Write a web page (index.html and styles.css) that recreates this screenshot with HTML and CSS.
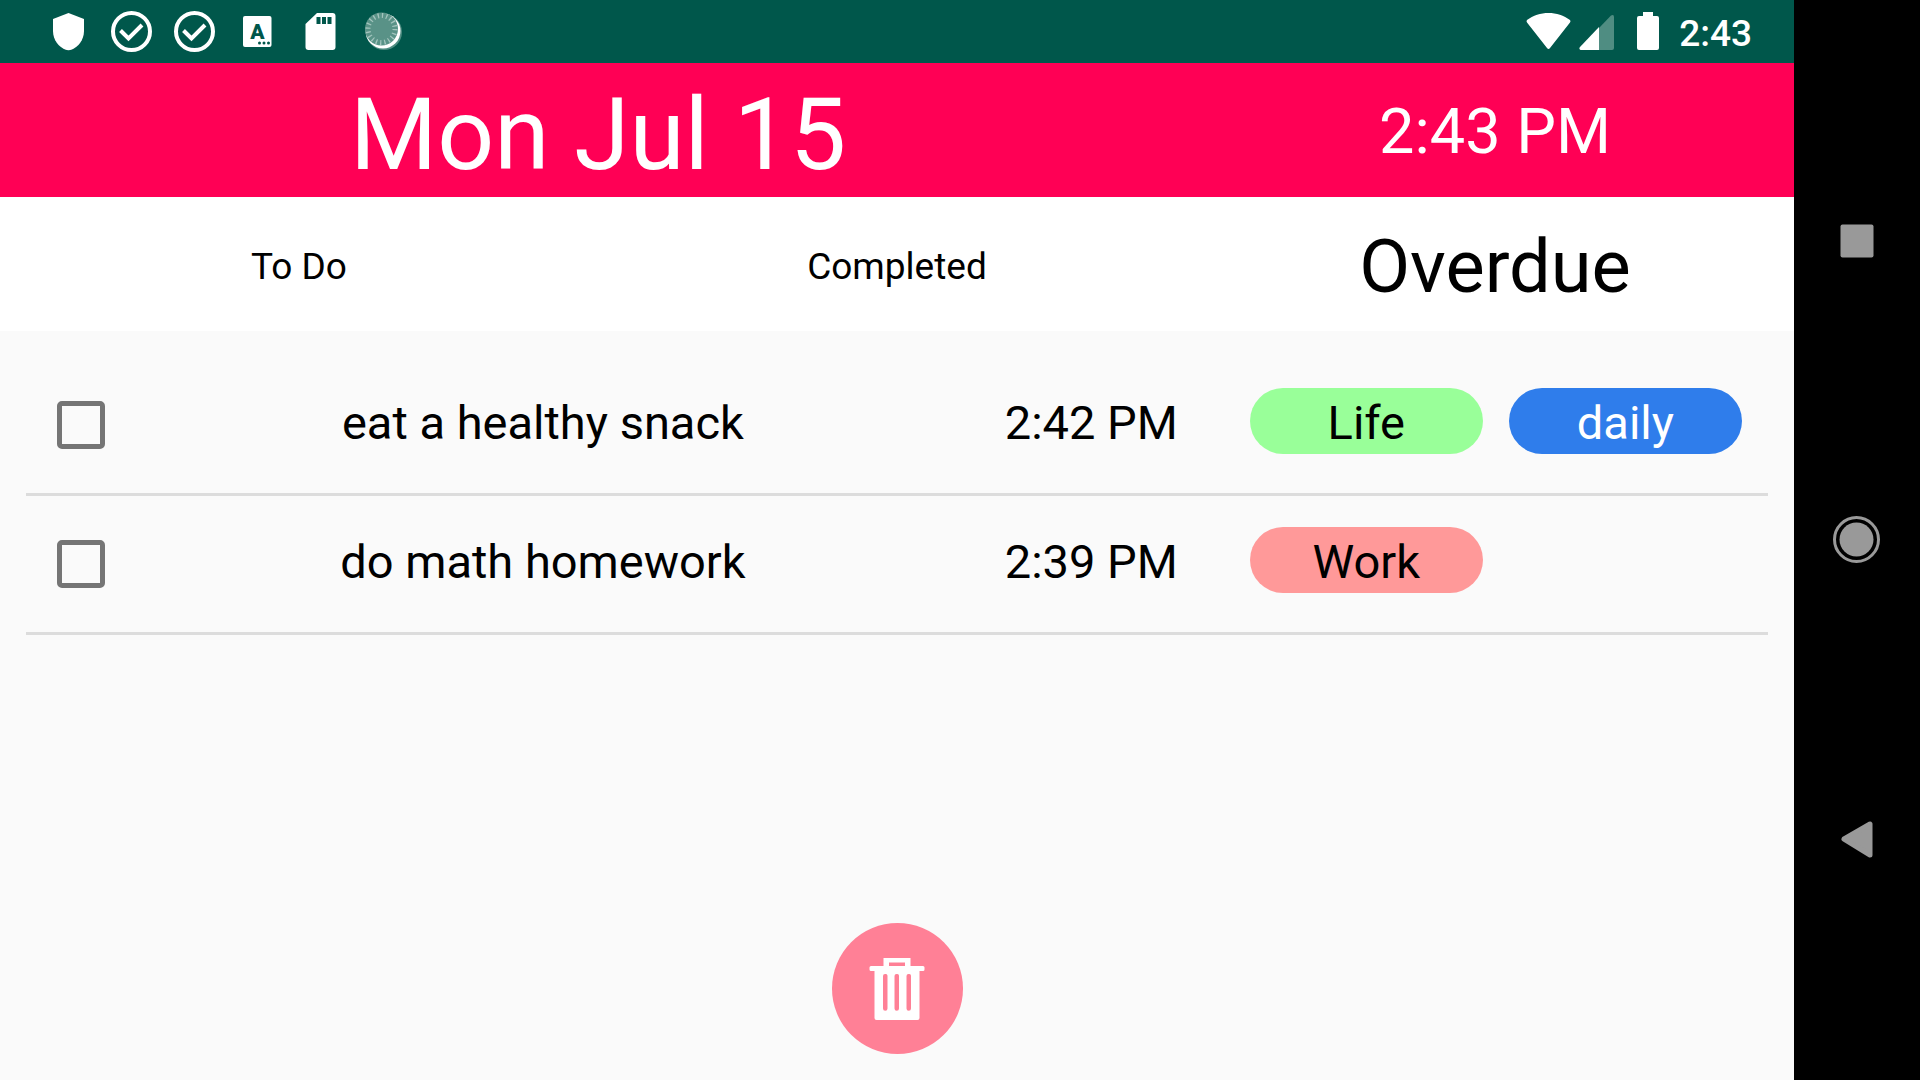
FILE: index.html
```
<!DOCTYPE html>
<html lang="en">
<head>
<meta charset="utf-8">
<meta name="viewport" content="width=device-width, initial-scale=1">
<title>Overdue tasks</title>
<link rel="stylesheet" href="styles.css">
</head>
<body>
<div class="device">
  <div class="screen">
    <div class="status-bar">
      <div class="notifications" aria-hidden="true">
        <svg class="notice" viewBox="0 0 63 63"><path fill="#fff" d="M31.500 13 47 19v12c0 9-6 16-12 18.500q-3.500 1.300-7 0C22 47 16 40 16 31V19z"/></svg>
        <svg class="notice" viewBox="0 0 63 63" fill="none" stroke="#fff" stroke-width="4"><circle cx="31.500" cy="31.500" r="18.500"/><path d="M20.500 30.500l8 8L42 25"/></svg>
        <svg class="notice" viewBox="0 0 63 63" fill="none" stroke="#fff" stroke-width="4"><circle cx="31.500" cy="31.500" r="18.500"/><path d="M20.500 30.500l8 8L42 25"/></svg>
        <svg class="notice" viewBox="0 0 63 63"><rect x="17" y="16" width="28.500" height="31" rx="2" fill="#fff"/><text class="notice-letter" x="31.500" y="39" text-anchor="middle">A</text><g fill="#00574b"><circle cx="33.500" cy="43" r="1.500"/><circle cx="38" cy="43" r="1.500"/><circle cx="42.500" cy="43" r="1.500"/></g></svg>
        <svg class="notice" viewBox="0 0 63 63"><path fill="#fff" d="M28 13h15.500q3 0 3 3v31q0 3-3 3h-24q-3 0-3-3V24z"/><path fill="#00574b" d="M27.500 17h4v7h-4zM33 17h4v7h-4zM38.500 17h4v7h-4z"/></svg>
        <svg class="notice" viewBox="0 0 63 63"><circle cx="32" cy="32" r="18" fill="#4f8d82"/><circle cx="31" cy="31" r="17.500" fill="#fff"/><circle cx="29.500" cy="29" r="16.500" fill="#599287"/><circle cx="29.500" cy="29" r="13.500" fill="none" stroke="#a3c5be" stroke-width="5" stroke-dasharray="1.300 2.940"/></svg>
      </div>
      <div class="system">
        <svg width="45" height="63" viewBox="0 0 45 63" aria-hidden="true"><path fill="#fff" d="M1 20C13 10.500 32 10.500 44 20q1 1 0 2.500L24 48q-1.500 2-3 0L1 22.500q-1-1.500 0-2.500z"/></svg>
        <svg class="signal" width="35" height="63" viewBox="0 0 35 63" aria-hidden="true"><path fill="#4f8d82" d="M20 28 32 15.500q3-1.500 3 1.500v31q0 2-2 2H20z"/><path fill="#fff" d="M20 27v23H1.500q-2-1-.5-3z"/></svg>
        <svg class="battery" width="22" height="63" viewBox="0 0 22 63" aria-hidden="true"><path fill="#fff" d="M6 12h10v4h4q2 0 2 2v30q0 2-2 2H2q-2 0-2-2V18q0-2 2-2h4z"/></svg>
        <time class="system-time">2:43</time>
      </div>
    </div>

    <header class="header">
      <h1 class="date">Mon Jul 15</h1>
      <time class="clock">2:43 PM</time>
    </header>

    <nav class="tabs">
      <button class="tab" type="button">To Do</button>
      <button class="tab" type="button">Completed</button>
      <button class="tab tab-active" type="button" aria-current="page">Overdue</button>
    </nav>

    <main class="content">
      <ul class="tasks">
        <li class="task">
          <input class="check" type="checkbox" id="task-snack">
          <label class="name" for="task-snack">eat a healthy snack</label>
          <time class="due">2:42 PM</time>
          <div class="chips"><span class="chip chip-life">Life</span><span class="chip chip-daily">daily</span></div>
        </li>
        <li class="task">
          <input class="check" type="checkbox" id="task-math">
          <label class="name" for="task-math">do math homework</label>
          <time class="due">2:39 PM</time>
          <div class="chips"><span class="chip chip-work">Work</span></div>
        </li>
      </ul>
      <button class="delete" type="button" aria-label="Delete">
        <svg width="56" height="64" viewBox="0 0 56 64" aria-hidden="true"><path fill="#fff" fill-rule="evenodd" d="M14.500 1h27v8H54q1.500 0 1.500 1.500v2q0 1.500-1.500 1.500h-3.500v47q0 2-2 2h-41q-2 0-2-2V14H2Q.5 14 .5 12.500v-2Q.5 9 2 9h12.500zM20 5.500V9h16V5.500zM16 17a2 2 0 0 0-2 2v32.500a2 2 0 0 0 4.500 0V19a2 2 0 0 0-2.500-2zM27.500 17a2 2 0 0 0-2 2v32.500a2 2 0 0 0 4.500 0V19a2 2 0 0 0-2.500-2zM39.500 17a2 2 0 0 0-2 2v32.500a2 2 0 0 0 4.500 0V19a2 2 0 0 0-2.500-2z"/></svg>
      </button>
    </main>
  </div>

  <div class="system-nav">
    <button class="nav-button" type="button" aria-label="Recent apps"><svg width="48" height="48" viewBox="0 0 48 48"><rect x="7.500" y="7.500" width="33" height="33" rx="2" fill="#999"/></svg></button>
    <button class="nav-button" type="button" aria-label="Home"><svg width="48" height="48" viewBox="0 0 48 48"><circle cx="23.500" cy="23.500" r="22" fill="none" stroke="#999" stroke-width="3"/><circle cx="23.500" cy="23.500" r="17" fill="#999"/></svg></button>
    <button class="nav-button" type="button" aria-label="Back"><svg width="48" height="48" viewBox="0 0 48 48"><path d="M11 24 37 9v31z" fill="#999" stroke="#999" stroke-width="5" stroke-linejoin="round"/></svg></button>
  </div>
</div>
</body>
</html>
```
FILE: styles.css
```
* {
  box-sizing: border-box;
}

body {
  margin: 0;
  background: #000;
  color: #000;
  font-family: Roboto, "Liberation Sans", sans-serif;
}

button {
  padding: 0;
  border: 0;
  background: none;
  color: inherit;
  font: inherit;
}

svg {
  display: block;
}

.device {
  display: flex;
  min-height: 100vh;
}

.screen {
  flex: 1;
  min-width: 0;
  display: flex;
  flex-direction: column;
  background: #fafafa;
}

/* Android status bar */
.status-bar {
  display: flex;
  justify-content: space-between;
  padding: 0 42px 0 37px;
  background: #00574b;
  color: #fff;
}

.notifications,
.system {
  display: flex;
  align-items: center;
}

.notice {
  width: 63px;
  height: 63px;
}

.notice-letter {
  fill: #00574b;
  font-size: 21px;
  font-weight: 900;
}

.signal {
  margin-left: 8px;
}

.battery {
  margin-left: 23px;
}

.system-time {
  margin-left: 20px;
  padding-top: 4px;
  font-size: 37px;
  font-weight: 500;
  line-height: 40px;
}

/* Date and time */
.header {
  display: grid;
  grid-template-columns: 2fr 1fr;
  align-items: center;
  min-height: 134px;
  background: #ff0055;
  color: #fff;
  text-align: center;
}

.date {
  margin: 0;
  padding-top: 10px;
  font-size: 100px;
  font-weight: 400;
  line-height: 120px;
}

.clock {
  padding-top: 4px;
  font-size: 63px;
  line-height: 74px;
}

.tabs {
  display: grid;
  grid-template-columns: repeat(3, 1fr);
  min-height: 134px;
  background: #fff;
}

.tab {
  padding-top: 4px;
  font-size: 37px;
}

.tab-active {
  font-size: 74px;
}

/* Task list */
.content {
  flex: 1;
  display: flex;
  flex-direction: column;
  padding: 26px;
}

.tasks {
  margin: 0;
  padding: 0;
  list-style: none;
  font-size: 47px;
  line-height: 62px;
}

.task {
  display: grid;
  grid-template-columns: 48px 107fr 27fr 66fr;
  align-items: center;
  min-height: 139px;
  padding: 0 26px 0 31px;
  border-bottom: 3px solid #dcdcdc;
}

.check {
  appearance: none;
  width: 48px;
  height: 48px;
  margin: 0;
  border: 5px solid #757575;
  border-radius: 5px;
}

.check:checked {
  background: #757575;
}

.name,
.due {
  padding-bottom: 4px;
  text-align: center;
  white-space: nowrap;
}

.chips {
  display: grid;
  grid-template-columns: 1fr 1fr;
  gap: 26px;
  padding: 0 0 8px 48px;
}

.chip {
  padding-top: 4px;
  border-radius: 33px;
  text-align: center;
}

.chip-life {
  background: #99ff99;
}

.chip-daily {
  background: #2f7deb;
  color: #fff;
}

.chip-work {
  background: #ff9999;
}

.delete {
  display: grid;
  place-items: center;
  width: 131px;
  height: 131px;
  margin: auto auto 0;
  border-radius: 50%;
  background: #ff8096;
}

/* Android navigation bar */
.system-nav {
  display: grid;
  grid-template-rows: repeat(3, 1fr);
  width: 126px;
  padding: 92px 0;
  background: #000;
}

.nav-button {
  display: grid;
  place-items: center;
}
```
